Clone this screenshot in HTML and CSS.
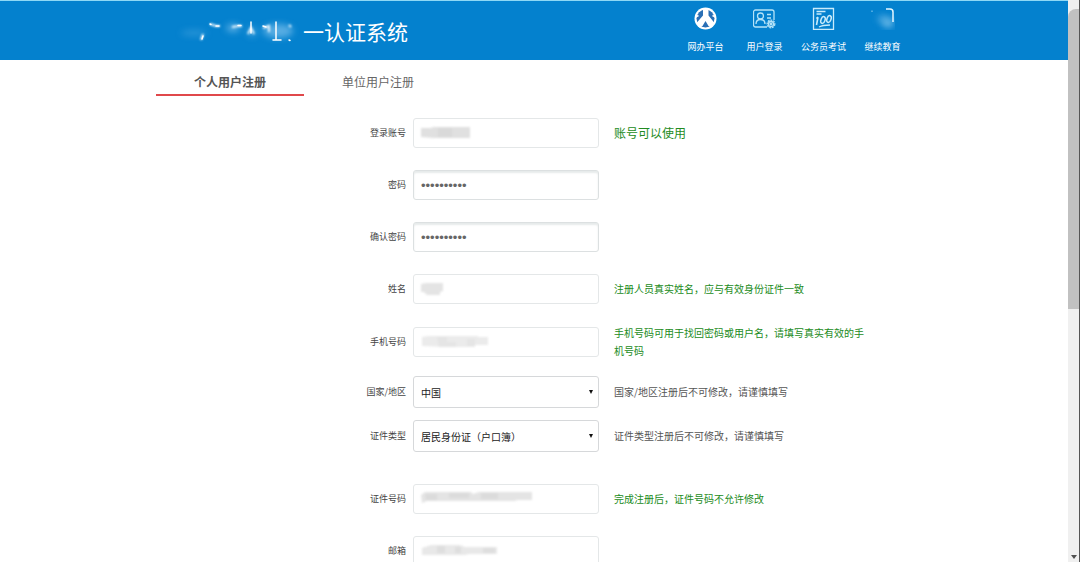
FILE: index.html
```html
<!DOCTYPE html>
<html lang="zh-CN">
<head>
<meta charset="utf-8">
<meta name="viewport" content="width=device-width, initial-scale=1">
<title>统一认证系统</title>
<link rel="stylesheet" href="styles.css">
</head>
<body>
<div class="page">
  <header class="header">
    <div class="container header-inner">
      <h1 class="brand">
        <svg class="brand-mask" viewBox="0 0 147 40" aria-hidden="true">
          <defs>
            <filter id="soft" x="-50%" y="-50%" width="200%" height="200%"><feGaussianBlur stdDeviation="3"/></filter>
            <filter id="slight" x="-50%" y="-50%" width="200%" height="200%"><feGaussianBlur stdDeviation="1"/></filter>
          </defs>
          <g filter="url(#soft)" fill="#6bb8e8">
            <ellipse cx="38" cy="22" rx="13" ry="3" opacity=".35"/>
            <ellipse cx="77" cy="17" rx="7" ry="4" opacity=".8"/>
            <ellipse cx="96" cy="21" rx="5" ry="5" opacity=".5"/>
            <ellipse cx="122" cy="20" rx="15" ry="7" opacity=".8"/>
          </g>
          <g fill="none" stroke="#e8f6fe" stroke-width="2" filter="url(#slight)">
            <path d="M54 13l6 2h4M76 16l6-1h4M92 23l3-6 3 6M45 29l2-6M107 17l6-2v6M133 14l2 2"/>
          </g>
          <g fill="none" stroke="#fff" stroke-width="1.500" stroke-linecap="round">
            <path d="M46 28l1-3M54 13l1 .5M60 15h3M82 14.500h3M95 11v11M107 15l3 1M120 11v18M117 29h8M133 29l1 .5"/>
          </g>
        </svg>
        <span>一认证系统</span>
      </h1>
      <nav class="quick" aria-label="快捷入口">
        <a class="quick-link" href="#">
          <svg class="quick-icon" viewBox="0 0 24 24" aria-hidden="true">
            <circle cx="11.500" cy="12.500" r="11" fill="#fff"/>
            <circle cx="11.500" cy="12.500" r="9" fill="#2a6fb5"/>
            <path d="M9 3h5.500v6.500l6 7.500-2 3h-4l-3-5-3 5h-4l-2-3L9 9.500z" fill="#fff"/>
            <path d="M1.500 11l3-1.500M21.500 11l-3-1.500M6 21.500l1.500-2.500M17 21.500L15.500 19" stroke="#fff" stroke-width="1.500"/>
          </svg>
          <span>网办平台</span>
        </a>
        <a class="quick-link" href="#">
          <svg class="quick-icon" viewBox="0 0 24 24" fill="none" stroke="#b5e3f8" stroke-width="1.300" aria-hidden="true">
            <path d="M14 21H2.500a2 2 0 0 1-2-2V6a2 2 0 0 1 2-2H19a2 2 0 0 1 2 2v8"/>
            <circle cx="7.500" cy="10" r="3"/>
            <path d="M3 18c0-6 9-6 9 0M14 8.500h4M14 12h4"/>
            <circle cx="18" cy="18" r="3.800" stroke-dasharray="2 .8"/>
            <circle cx="18" cy="18" r="2.500"/>
            <circle cx="18" cy="18" r=".8"/>
          </svg>
          <span>用户登录</span>
        </a>
        <a class="quick-link" href="#">
          <svg class="quick-icon" viewBox="0 0 24 24" fill="none" stroke="#c8ebfb" stroke-width="1.300" aria-hidden="true">
            <path d="M1.500 2.500h20v21h-20zM4.500 5.500h9M4.500 8h5"/>
            <path d="M6 11l-1.500 8M4.300 12.500L6 11" stroke-width="1.600"/>
            <ellipse cx="11" cy="14" rx="2" ry="3.500" transform="rotate(20 11 14)" stroke-width="1.500"/>
            <ellipse cx="17" cy="13" rx="2" ry="3.500" transform="rotate(20 17 13)" stroke-width="1.500"/>
            <path d="M7 21c3-1.500 7-2 11-2"/>
          </svg>
          <span>公务员考试</span>
        </a>
        <a class="quick-link" href="#">
          <svg class="quick-icon" viewBox="0 0 24 24" fill="none" aria-hidden="true">
            <ellipse cx="12" cy="13" rx="6" ry="4" fill="#54ace2" opacity=".7" filter="url(#soft)"/>
            <ellipse cx="17" cy="17" rx="6" ry="5" fill="#74bfea" opacity=".8" filter="url(#soft)"/>
            <path d="M15 3h4q3 0 3 3v10" stroke="#e5f6ff" stroke-width="1.500"/>
            <path d="M1 4.500V6" stroke="#8fd0f2"/>
          </svg>
          <span>继续教育</span>
        </a>
      </nav>
    </div>
  </header>

  <main class="container">
    <nav class="tabs" aria-label="注册类型">
      <a class="tab tab-active" href="#" aria-current="page">个人用户注册</a>
      <a class="tab" href="#">单位用户注册</a>
    </nav>

    <form class="form">
      <div class="row">
        <label class="label" for="account">登录账号</label>
        <div class="field">
          <input class="input" id="account" type="text">
          <svg class="mask" viewBox="0 0 120 16" aria-hidden="true"><path d="M2 3h10l2-1h37v11H14l-12-1z" fill="#e0e0e0"/><path d="M19 3h14v9H19z" fill="#d9d9d9"/></svg>
        </div>
        <p class="hint hint-ok hint-large">账号可以使用</p>
      </div>
      <div class="row">
        <label class="label" for="password">密码</label>
        <div class="field"><input class="input input-secret" id="password" type="password" value="1234567890"></div>
      </div>
      <div class="row">
        <label class="label" for="confirm">确认密码</label>
        <div class="field"><input class="input input-secret" id="confirm" type="password" value="1234567890"></div>
      </div>
      <div class="row row-close">
        <label class="label" for="name">姓名</label>
        <div class="field">
          <input class="input" id="name" type="text">
          <svg class="mask" viewBox="0 0 120 16" aria-hidden="true"><path d="M2 3l5-1h17v8l-3 1v3H8l-3-3H2z" fill="#e4e4e4"/></svg>
        </div>
        <p class="hint hint-ok">注册人员真实姓名，应与有效身份证件一致</p>
      </div>
      <div class="row row-near">
        <label class="label" for="phone">手机号码</label>
        <div class="field">
          <input class="input" id="phone" type="text">
          <svg class="mask" viewBox="0 0 120 16" aria-hidden="true"><path d="M3 3l6-1h50v1h10v8H56v2H26l-23-1z" fill="#ebebeb"/><path d="M18 3h10v5h9v5H20zM48 5h8v7h-8z" fill="#e5e5e5"/></svg>
        </div>
        <p class="hint hint-ok">手机号码可用于找回密码或用户名，请填写真实有效的手机号码</p>
      </div>
      <div class="row row-tight">
        <label class="label" for="region">国家/地区</label>
        <div class="field field-select"><select class="input select" id="region"><option>中国</option></select></div>
        <p class="hint">国家/地区注册后不可修改，请谨慎填写</p>
      </div>
      <div class="row row-wide">
        <label class="label" for="idtype">证件类型</label>
        <div class="field field-select"><select class="input select" id="idtype"><option>居民身份证（户口簿）</option></select></div>
        <p class="hint">证件类型注册后不可修改，请谨慎填写</p>
      </div>
      <div class="row">
        <label class="label" for="idnumber">证件号码</label>
        <div class="field">
          <input class="input" id="idnumber" type="text">
          <svg class="mask" viewBox="0 0 120 16" aria-hidden="true"><path d="M2 4l4-3h46l2 2 6-2h53v8H98l-2 1H8l-5 2z" fill="#e4e4e4"/><path d="M6 3h12v6H7zM30 2h20v5H30zM62 2h17v6H62z" fill="#dbdbdb"/></svg>
        </div>
        <p class="hint hint-ok">完成注册后，证件号码不允许修改</p>
      </div>
      <div class="row">
        <label class="label" for="email">邮箱</label>
        <div class="field">
          <input class="input" id="email" type="text">
          <svg class="mask" viewBox="0 0 120 16" aria-hidden="true"><path d="M3 5l9-3h29l5 2h32v7H50l-4 1H3z" fill="#e8e8e8"/><path d="M18 3h8v7h-8zM36 4h6v6h-6zM64 5h12v5H64z" fill="#dedede"/></svg>
        </div>
      </div>
    </form>
  </main>
</div>
<div class="scrollbar" aria-hidden="true">
  <div class="thumb"></div>
  <svg class="arrow" viewBox="0 0 6 4"><path d="M0 0h6L3 4z" fill="#505050"/></svg>
</div>
</body>
</html>
```
FILE: styles.css
```css
* { box-sizing: border-box; }

body {
  margin: 0;
  height: 100vh;
  display: flex;
  overflow: hidden;
  background: #fff;
  color: #555;
  font-family: "Noto Sans CJK SC", "Noto Sans", sans-serif;
  font-size: 10px;
}

.page { flex: 1; min-width: 0; overflow: hidden; }

.container { max-width: 756px; margin: 0 auto; }

.header {
  background: #0481ce;
  border-top: 1px solid #8fd8f5;
  color: #fff;
}

.header-inner {
  display: flex;
  justify-content: space-between;
  min-height: 59px;
}

.brand {
  display: flex;
  align-items: center;
  margin: 0;
  font-size: 21px;
  font-weight: 400;
  line-height: 30px;
}

.brand-mask { width: 147px; height: 40px; }

.quick { display: flex; }

.quick-link {
  width: 59px;
  padding-top: 5px;
  display: flex;
  flex-direction: column;
  align-items: center;
  gap: 10px;
  color: #fff;
  font-size: 9px;
  line-height: 14px;
  text-decoration: none;
  white-space: nowrap;
}

.quick-icon { width: 24px; height: 24px; }

.tabs { display: flex; }

.tab {
  width: 148px;
  padding: 13px 0 3px;
  border-bottom: 2px solid transparent;
  color: #666;
  font-size: 12px;
  line-height: 18px;
  text-align: center;
  text-decoration: none;
}

.tab-active { border-bottom-color: #e0484b; color: #555; font-weight: 700; }

.form { padding-top: 22px; }

.row {
  display: grid;
  grid-template-columns: 250px 186px minmax(0, 267px);
  column-gap: 7px;
  align-items: center;
  margin-bottom: 22px;
}

.row-close { margin-bottom: 20px; }
.row-near { margin-bottom: 16px; }
.row-tight { margin-bottom: 12px; }
.row-wide { margin-bottom: 32px; }

.label {
  color: #444;
  font-size: 9px;
  line-height: 14px;
  text-align: right;
}

.field { position: relative; }

.input {
  display: block;
  width: 100%;
  height: 30px;
  padding: 0 8px;
  border: 1px solid #e4e7e8;
  border-radius: 3px;
  background: #fff;
  color: #666;
  font-family: inherit;
  font-size: 10px;
}

.input-secret {
  padding: 0 7px;
  border-color: #dce0e1;
  box-shadow: inset 0 2px 2px #e6eaea;
  font-family: "Liberation Sans", Arial, sans-serif;
  font-size: 13px;
}

.select {
  height: 32px;
  padding: 0 7px;
  appearance: none;
  border-color: #d6d8da;
  color: #222;
}

.field-select::after {
  content: "";
  position: absolute;
  right: 6px;
  top: 14px;
  border: 2px solid transparent;
  border-top: 4px solid #111;
  border-bottom: 0;
  pointer-events: none;
}

.mask {
  position: absolute;
  left: 6px;
  top: 7px;
  width: 120px;
  height: 16px;
  pointer-events: none;
  filter: blur(1px);
}

.hint {
  margin: 0;
  padding-left: 8px;
  color: #555;
  line-height: 18px;
}

.hint-ok { color: #228b22; }
.hint-large { font-size: 12px; }

.scrollbar {
  width: 12px;
  display: flex;
  flex-direction: column;
  align-items: center;
  justify-content: space-between;
  padding: 9px 0 3px;
  border-right: 1px solid #555;
  background: #f0f0f0;
}

.thumb {
  width: 100%;
  height: 300px;
  border-radius: 8px 0 0 0;
  background: #c1c1c1;
}

.arrow { width: 6px; height: 4px; }
```
